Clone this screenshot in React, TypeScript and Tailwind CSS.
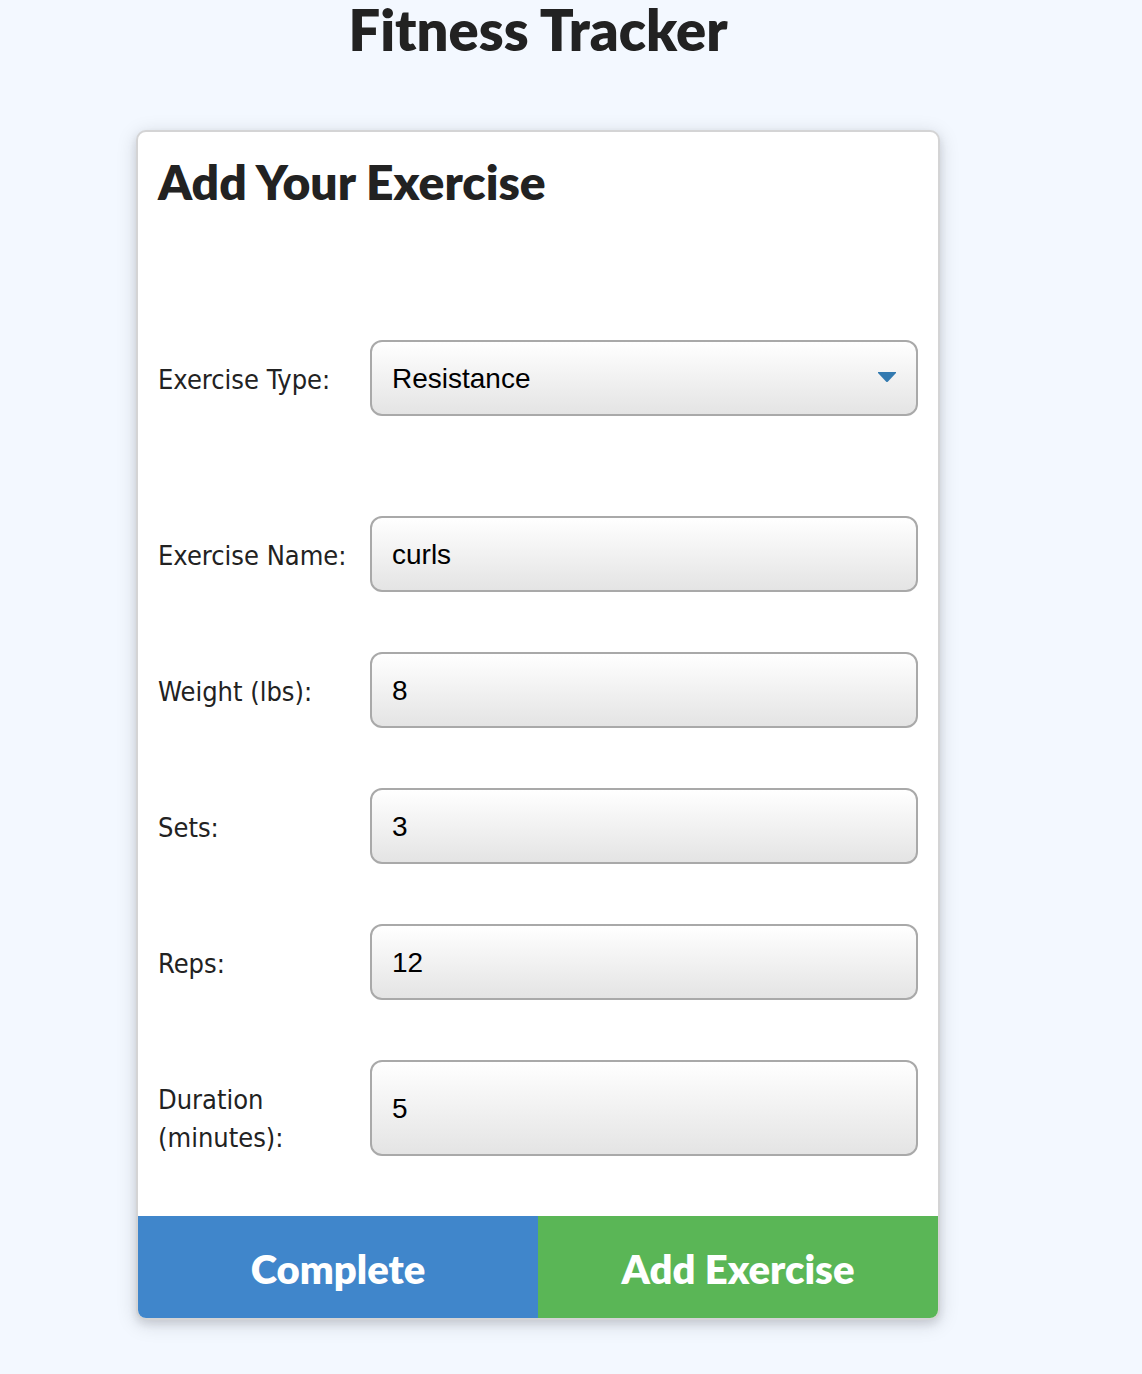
import React from "react";

const controlClass =
  "w-full min-w-0 appearance-none rounded-[12px] border-2 border-[#a9a9a9] bg-linear-to-b from-white to-[#e4e4e4] px-5 pt-[2px] font-['Liberation_Sans',Arial,sans-serif] text-[28px] text-black";

function Row({ id, label, tall, children }: { id: string; label: string; tall?: boolean; children: React.ReactNode }) {
  return (
    <div className={tall ? "flex h-24" : "flex h-19"}>
      <label htmlFor={id} className="w-53 shrink-0 pt-[21px] pr-5 text-[27px] leading-[38px]">
        {label}
      </label>
      <div className="relative flex min-w-0 flex-1">{children}</div>
    </div>
  );
}

function TextRow({ id, label, value, tall }: { id: string; label: string; value: string; tall?: boolean }) {
  return (
    <Row id={id} label={label} tall={tall}>
      <input id={id} type="text" defaultValue={value} className={controlClass} />
    </Row>
  );
}

export default function App() {
  return (
    <div className="min-h-screen bg-[#f3f8ff] pr-[66px] pb-14 font-['DejaVu_Sans_Condensed','DejaVu_Sans',sans-serif] text-[#222222]">
      <h1 className="text-center font-[Lato,sans-serif] text-[56px] leading-[60px] font-extrabold">
        Fitness Tracker
      </h1>
      <form
        onSubmit={(e) => e.preventDefault()}
        className="mx-auto mt-[70px] w-full max-w-[804px] overflow-hidden rounded-[10px] border-2 border-[#d4d4d5] bg-white shadow-[0_4px_8px_rgba(34,36,38,0.12),0_4px_20px_rgba(34,36,38,0.15)]"
      >
        <div className="px-5">
          <h2 className="pt-5 font-[Lato,sans-serif] text-[48px] leading-[60px] font-extrabold">Add Your Exercise</h2>
          <div className="mt-32">
            <Row id="type" label="Exercise Type:">
              <select id="type" defaultValue="Resistance" className={controlClass}>
                <option>Resistance</option>
                <option>Cardio</option>
              </select>
              <svg
                viewBox="0 0 20 12"
                className="pointer-events-none absolute top-[31px] right-[21px] h-3 w-5"
                fill="#337ab0"
                aria-hidden="true"
              >
                <path d="M1 1H19V2L11 10.5Q10 11.5 9 10.5L1 2Z" />
              </svg>
            </Row>
          </div>
          <div className="mt-25 flex flex-col gap-15 pb-15">
            <TextRow id="name" label="Exercise Name:" value="curls" />
            <TextRow id="weight" label="Weight (lbs):" value="8" />
            <TextRow id="sets" label="Sets:" value="3" />
            <TextRow id="reps" label="Reps:" value="12" />
            <TextRow id="duration" label="Duration (minutes):" value="5" tall />
          </div>
        </div>
        <div className="grid grid-cols-2 font-[Lato,sans-serif] text-[40px] leading-[98px] font-extrabold text-white">
          <button type="button" className="bg-[#4086cb] pt-1">
            Complete
          </button>
          <button type="submit" className="bg-[#5ab656] pt-1">
            Add Exercise
          </button>
        </div>
      </form>
    </div>
  );
}
